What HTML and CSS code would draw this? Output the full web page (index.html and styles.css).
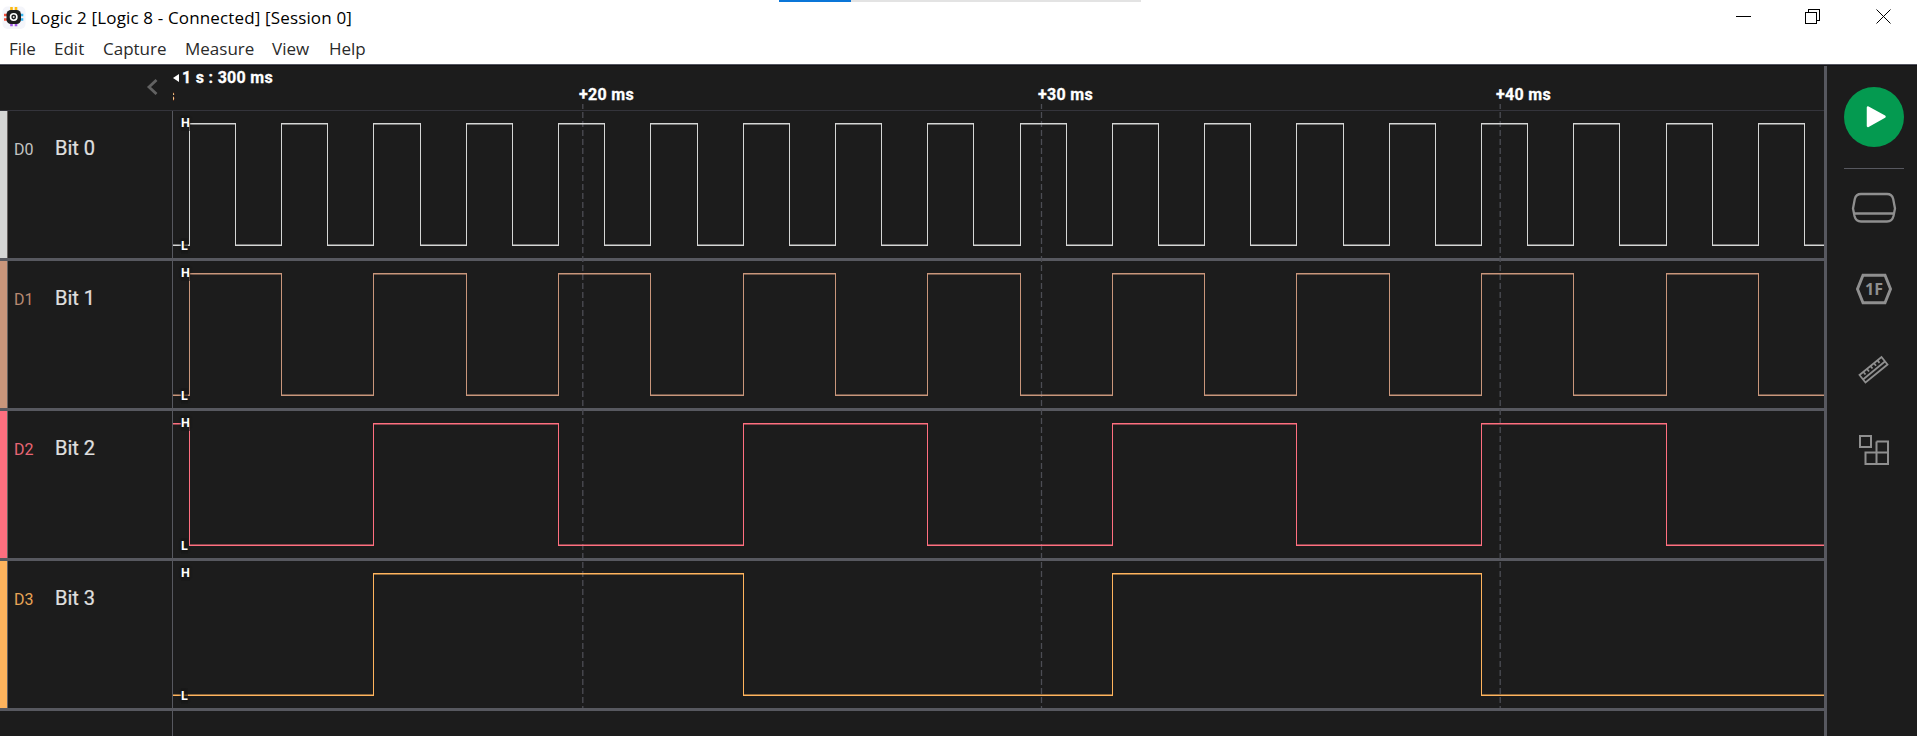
FILE: index.html
```
<!DOCTYPE html>
<html lang="en">
<head>
<meta charset="utf-8">
<title>Logic 2 [Logic 8 - Connected] [Session 0]</title>
<link rel="stylesheet" href="styles.css">
</head>
<body>
<div class="window">
  <header class="chrome">
    <div class="progress"><div class="progress-value"></div></div>
    <div class="titlebar">
      <svg class="logo" width="24" height="24" viewBox="0 0 24 24">
        <rect x="0.5" y="0.5" width="23" height="22.500" rx="5" fill="#f4f5fa"/>
        <g stroke-width="2.600">
          <path d="M9.500 1v5M14 1v5" stroke="#fdbb11"/>
          <path d="M9.500 15v5.300M14 15v5.300" stroke="#a259e6"/>
          <path d="M2 9h5M2 13.500h5" stroke="#f4513c"/>
          <path d="M16 9h5.300M16 13.500h5.300" stroke="#35b4ee"/>
        </g>
        <rect x="4.500" y="4" width="14.500" height="14" rx="4.500" fill="#1d1d1f"/>
        <circle cx="11.700" cy="11" r="3.200" fill="#1d1d1f" stroke="#fff" stroke-width="1.600"/>
        <circle cx="11.700" cy="11" r="1" fill="#ddd"/>
      </svg>
      <span class="title">Logic 2 [Logic 8 - Connected] [Session 0]</span>
      <svg class="controls" width="160" height="20" viewBox="0 0 160 20" shape-rendering="crispEdges" fill="none" stroke="#000">
        <path d="M0 9.500h15"/>
        <path d="M69.500 5.500h11v11h-11zM72.500 5V2.500h11v11H81"/>
        <path d="M140.500 2.500l14 14M154.500 2.500l-14 14" shape-rendering="auto"/>
      </svg>
    </div>
    <nav class="menu">
      <span class="m-file">File</span><span class="m-edit">Edit</span><span class="m-capture">Capture</span><span class="m-measure">Measure</span><span class="m-view">View</span><span class="m-help">Help</span>
    </nav>
  </header>
  <div class="workspace">
    <main class="analyzer">
      <div class="ruler">
        <div class="ruler-left">
          <svg width="12" height="16" viewBox="0 0 12 16" fill="none" stroke="#626262" stroke-width="2.800"><path d="M10.500 1L3 8l7.500 7"/></svg>
        </div>
        <div class="ruler-scale">
          <div class="origin"><svg width="6" height="8" viewBox="0 0 6 8"><path d="M6 0v8L0 4z" fill="#fff"/></svg><span>1 s : 300 ms</span></div>
          <div class="clip"><span>s</span></div>
          <span class="tick t20">+20 ms</span>
          <span class="tick t30">+30 ms</span>
          <span class="tick t40">+40 ms</span>
        </div>
      </div>
      <div class="channels" id="channels">
        <svg class="grid" width="1651" height="604" viewBox="0 0 1651 604" id="grid"></svg>
      </div>
      <div class="empty"><div class="empty-label"></div></div>
    </main>
    <aside class="sidebar">
      <div class="play"><svg width="60" height="60" viewBox="0 0 60 60"><path d="M24 20.500L40.500 29.700L24 39z" fill="#fff" stroke="#fff" stroke-width="2.500" stroke-linejoin="round"/></svg></div>
      <div class="rule"></div>
      <svg class="device" width="46" height="32" viewBox="0 0 46 32" fill="none" stroke="#8f8f8f" stroke-width="2.300">
        <path d="M10 2h26q5 0 6.200 5L44 16.500l-1.500 7.500q-1.300 5.500-6.500 5.500h-26q-5.200 0-6.500-5.500l-1.500-7.500L3.800 7Q5 2 10 2zM3 21.500h40"/>
      </svg>
      <svg class="hex" width="36" height="32" viewBox="0 0 36 32">
        <path d="M7 2.200h22L34.500 16 29 29.800H7L1.500 16z" fill="none" stroke="#8f8f8f" stroke-width="2.900"/>
        <text x="18" y="21.500" text-anchor="middle" class="hex-text">1F</text>
      </svg>
      <svg class="measure" width="32" height="30" viewBox="0 0 32 30" fill="none" stroke="#8f8f8f" stroke-width="1.800">
        <path d="M1.500 20L23.500 2l6 7.500-22 18zM5 24.500l22.500-18.500M5.500 17l2 2.500M9 14l2 2.500M12.500 11l2 2.500M16 8.300l2 2.500M19.500 5.400l2 2.500"/>
      </svg>
      <svg class="blocks" width="30" height="30" viewBox="0 0 30 30" fill="none" stroke="#8f8f8f" stroke-width="2">
        <path d="M1 1h11v11H1zM17.500 6.500H29V29H6.500V17.500H29M17.500 6.500V29"/>
      </svg>
    </aside>
  </div>
</div>
<script src="script.js"></script>
</body>
</html>
```
FILE: styles.css
```
* { box-sizing: border-box; }
body { margin: 0; background: #1c1c1c; overflow: hidden; }
.window { display: flex; flex-direction: column; width: 1917px; height: 736px; }
.chrome { position: relative; height: 66px; flex: none; background: #fff; border-bottom: 1px solid #121216; box-shadow: inset 0 -1px #55565f; font-family: "Open Sans", "Noto Sans", sans-serif; color: #000; }
.progress { position: absolute; left: 779px; top: 0; width: 362px; height: 2px; background: #e3e3e3; }
.progress-value { width: 72px; height: 2px; background: #0a76d8; }
.titlebar { display: flex; height: 32px; padding: 6px 0 0 2px; }
.logo { flex: none; }
.title { margin-left: 5px; font-size: 17px; line-height: 23px; letter-spacing: .15px; width: 330px; white-space: nowrap; }
.controls { margin-left: auto; margin-right: 21px; margin-top: 1px; }
.menu { display: flex; padding-left: 9px; font-size: 17px; line-height: 33px; color: #2a2a2a; }
.m-file { width: 45px; }
.m-edit { width: 49px; }
.m-capture { width: 82px; }
.m-measure { width: 87px; }
.m-view { width: 57px; }
.workspace { display: flex; flex: 1; }
.analyzer { width: 1824px; display: flex; flex-direction: column; font-family: Roboto, sans-serif; }
.ruler { display: flex; height: 45px; border-bottom: 1px solid #34343b; }
.ruler-left { width: 173px; padding: 13px 0 0 146px; }
.ruler-scale { position: relative; flex: 1; color: #fff; font-weight: 700; font-size: 16px; line-height: 18px; letter-spacing: .3px; -webkit-text-stroke: .3px #fff; }
.origin { display: flex; align-items: center; gap: 3px; padding-top: 3px; }
.clip { width: 2px; height: 18px; overflow: hidden; }
.clip span { display: block; margin-left: -7px; }
.tick { position: absolute; top: 20px; white-space: nowrap; }
.t20 { left: 406px; }
.t30 { left: 865px; }
.t40 { left: 1323px; }
.channels { position: relative; }
.grid { position: absolute; left: 173px; top: -7px; }
.channel { display: flex; height: 150px; border-bottom: 3px solid #57585f; color: var(--c); }
.label { width: 173px; display: flex; align-items: baseline; border-left: 7px solid var(--c); border-right: 1px solid #57585f; box-shadow: inset 1px 0 #66615f; }
.id { width: 41px; margin-left: 7px; font-size: 16px; line-height: 77px; opacity: .9; }
.name { font-size: 20px; color: #e0e0e0; -webkit-text-stroke: .2px #e0e0e0; }
.trace { position: relative; width: 1651px; }
.trace svg { display: block; }
.level { position: absolute; left: 8px; color: #fff; font-size: 12.5px; line-height: 16px; font-weight: 700; text-shadow: 0 0 2px #161616, 0 0 3px #161616; background: rgba(24, 24, 24, .6); }
.high { top: 4px; }
.low { top: 127px; }
.empty { flex: 1; display: flex; }
.empty-label { width: 173px; border-right: 1px solid #57585f; }
.sidebar { width: 93px; border-left: 3px solid #57585f; display: flex; flex-direction: column; align-items: center; }
.play { width: 60px; height: 60px; border-radius: 50%; background: #049a50; margin: 21px 0 0 3px; flex: none; }
.rule { width: 60px; height: 1px; background: #57585f; margin: 21px 0 23px 3px; flex: none; }
.device { margin-left: 3px; }
.hex { margin: 49px 0 0 3px; }
.hex-text { font: 700 16px "Open Sans", sans-serif; fill: #8f8f8f; }
.measure { margin: 50px 0 0 3px; }
.blocks { margin: 50px 0 0 3px; }
```
FILE: script.js
```
// Each channel toggles every `step` half-periods of the fastest bit.
const channels = [
  { color: '#d5d6d5', start: 0, first: 0, step: 1 },
  { color: '#c9967b', start: 0, first: 0, step: 2 },
  { color: '#ff6f7f', start: 1, first: 0, step: 4 },
  { color: '#ffb45d', start: 0, first: 4, step: 8 }
];
const WIDTH = 1651, HIGH = 12, LOW = 134;
const edgeX = k => Math.round(15.85 + k * 46.15);
const host = document.getElementById('channels');

channels.forEach((ch, i) => {
  let level = ch.start, x = 0, solid = '', dim = '';
  const segment = to => {
    const y = level ? HIGH : LOW;
    solid += `<rect x="${x}" y="${y}" width="${to - x}" height="1"/>`;
    dim += `<rect x="${x}" y="${level ? y + 1 : y - 1}" width="${to - x}" height="1"/>`;
  };
  for (let k = ch.first; k <= 35; k += ch.step) {
    const to = edgeX(k);
    segment(to);
    solid += `<rect x="${to}" y="${HIGH}" width="1" height="${LOW - HIGH + 1}"/>`;
    level = 1 - level;
    x = to;
  }
  segment(WIDTH);
  host.insertAdjacentHTML('beforeend', `<section class="channel" style="--c:${ch.color}">
    <div class="label"><span class="id">D${i}</span><span class="name">Bit ${i}</span></div>
    <div class="trace"><svg width="${WIDTH}" height="147" shape-rendering="crispEdges" fill="${ch.color}"><g opacity=".5">${dim}</g>${solid}</svg>
    <span class="level high">H</span><span class="level low">L</span></div></section>`);
});

document.getElementById('grid').innerHTML = [409.8, 868.5, 1327.2].map(x =>
  `<path d="M${x} 0V604" stroke="#4c4d54" stroke-width="1.300" stroke-dasharray="6 3" stroke-dashoffset="1"/>`).join('');
```
